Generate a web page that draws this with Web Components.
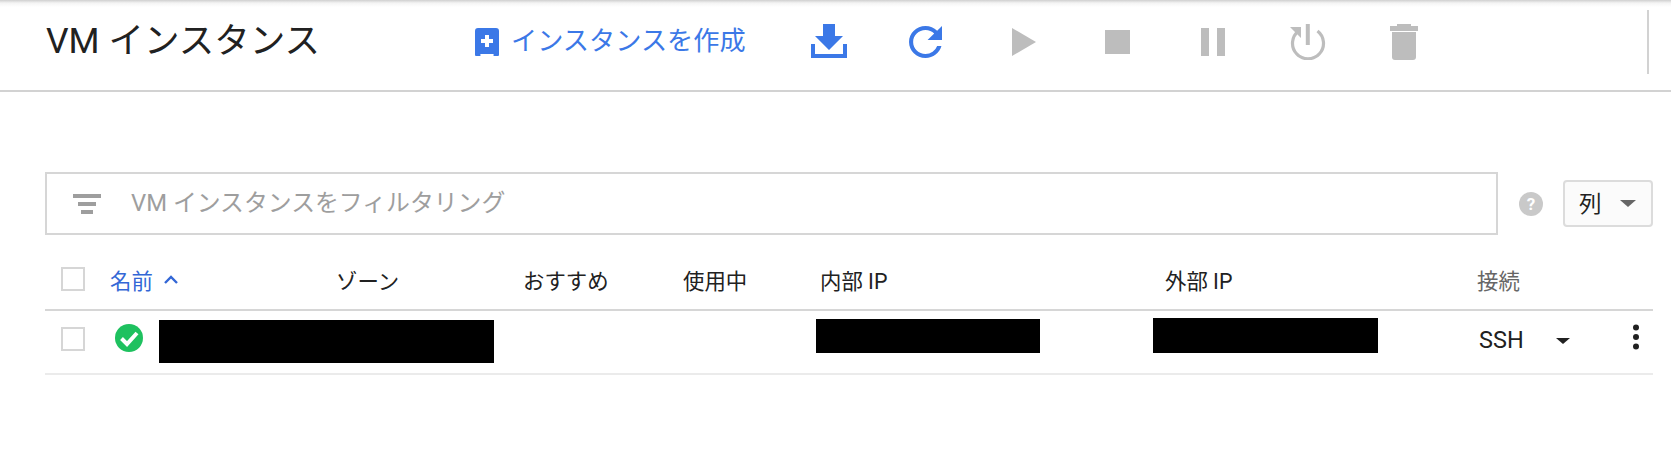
<!DOCTYPE html>
<html lang="ja">
<head>
<meta charset="utf-8">
<title>VM インスタンス</title>
<style>
  html,body{margin:0;background:#fff}
  body{font-family:Roboto,"Noto Sans CJK JP",sans-serif;color:#212121;width:1671px;height:473px;overflow:hidden}
</style>
</head>
<body>
<vm-toolbar></vm-toolbar>
<vm-filter-bar placeholder="VM インスタンスをフィルタリング"></vm-filter-bar>
<vm-table></vm-table>
<script>
const BLUE = "#3b78e7";
const GREY = "#bdbdbd";

class VmToolbar extends HTMLElement {
  constructor() {
    super();
    this.attachShadow({ mode: "open" });
  }
  connectedCallback() {
    this.shadowRoot.innerHTML = `
      <style>
        :host{display:flex;align-items:flex-start;height:90px;border-bottom:2px solid #d2d2d2;padding-left:46px;box-sizing:content-box;
          background:linear-gradient(#cfcfcf,#f4f4f4 3px,#fff 7px)}
        h1{margin:0;flex:0 0 429px;font:400 35.5px/50px Roboto,"Noto Sans CJK JP",sans-serif;color:#212121;padding-top:16px;white-space:nowrap}
        .create{flex:0 0 336px;display:flex;align-items:flex-start;color:${BLUE};font-size:26.2px;line-height:36px;padding-top:23px}
        .create svg{margin:5px 12px 0 0;flex:none}
        .create span{white-space:nowrap}
        svg{display:block;flex:none}
        .ico{margin-top:var(--t);margin-left:var(--l)}
        .sep{width:2px;height:64px;margin:10px 0 0 229px;background:#d2d2d2;flex:none}
      </style>
      <h1>VM インスタンス</h1>
      <div class="create">
        <svg width="24" height="28" viewBox="0 0 24 28"><path fill="${BLUE}" d="M3 0h18a3 3 0 0 1 3 3v24a1 1 0 0 1-1 1h-3a1 1 0 0 1-1-2H5a1 1 0 0 1-1 2H1a1 1 0 0 1-1-1V3a3 3 0 0 1 3-3z"/><path fill="#fff" d="M10 7h4v4h4v4h-4v4h-4v-4H6v-4h4z"/></svg>
        <span>インスタンスを作成</span>
      </div>
      <svg class="ico" style="--t:24px;--l:0" width="36" height="34" viewBox="0 0 36 34"><path fill="${BLUE}" d="M12 0h12v12h8L18 26 4 12h8zM0 20h4v10h28V20h4v14H0z"/></svg>
      <svg class="ico" style="--t:26px;--l:62px" width="33" height="32" viewBox="4 4 16 16" preserveAspectRatio="none"><path fill="${BLUE}" d="M17.65 6.35A7.958 7.958 0 0 0 12 4c-4.42 0-7.99 3.58-7.99 8s3.57 8 7.99 8c3.73 0 6.84-2.55 7.73-6h-2.08A5.99 5.99 0 0 1 12 18c-3.31 0-6-2.69-6-6s2.69-6 6-6c1.66 0 3.14.69 4.22 1.78L13 11h7V4l-2.35 2.35z"/></svg>
      <svg class="ico" style="--t:28px;--l:70px" width="24" height="28" viewBox="0 0 24 28"><path fill="${GREY}" d="M0 0l24 14L0 28z"/></svg>
      <svg class="ico" style="--t:30px;--l:69px" width="25" height="24"><rect width="25" height="24" fill="${GREY}"/></svg>
      <svg class="ico" style="--t:28px;--l:71px" width="24" height="28"><rect width="8" height="28" fill="${GREY}"/><rect x="16" width="8" height="28" fill="${GREY}"/></svg>
      <svg class="ico" style="--t:24px;--l:65px" width="36" height="36" viewBox="0 0 36 36"><path fill="none" stroke="${GREY}" stroke-width="3.2" d="M8.5 7A15.5 15.5 0 1 0 27.5 7"/><path fill="${GREY}" d="M15.8 0h4v21h-4zM0 3h11v11z"/></svg>
      <svg class="ico" style="--t:24px;--l:64px" width="28" height="36" viewBox="0 0 28 36"><path fill="${GREY}" d="M7 0h14v2h7v5H0V2h7zM2 8h24v25a3 3 0 0 1-3 3H5a3 3 0 0 1-3-3z"/></svg>
      <div class="sep"></div>
    `;
  }
}

class VmFilterBar extends HTMLElement {
  constructor() {
    super();
    this.attachShadow({ mode: "open" });
  }
  connectedCallback() {
    this.shadowRoot.innerHTML = `
      <style>
        :host{display:flex;align-items:center;margin:80px 0 0 45px;width:1608px}
        .box{width:1453px;height:63px;box-sizing:border-box;border:2px solid #d6d6d6;display:flex;align-items:center;padding-left:26px;flex:none}
        .box svg{margin-right:30px;flex:none}
        .ph{color:#9e9e9e;font-size:23.85px;white-space:nowrap;margin-bottom:6px}
        .help{margin-left:21px;flex:none}
        vm-column-button{margin-left:20px}
      </style>
      <div class="box">
        <svg width="28" height="20"><path fill="#9e9e9e" d="M0 0h28v4H0zM5 8h18v4H5zM8 16h12v4H8z"/></svg>
        <span class="ph">${this.getAttribute("placeholder") ?? ""}</span>
      </div>
      <svg class="help" width="24" height="24" viewBox="0 0 24 24"><circle cx="12" cy="12" r="12" fill="#c9c9c9"/><text x="12" y="18" text-anchor="middle" fill="#fff" font-family="Roboto,sans-serif" font-weight="700" font-size="17">?</text></svg>
      <vm-column-button>列</vm-column-button>
    `;
  }
}

class VmColumnButton extends HTMLElement {
  constructor() {
    super();
    this.attachShadow({ mode: "open" });
  }
  connectedCallback() {
    this.shadowRoot.innerHTML = `
      <style>
        :host{display:flex;align-items:center;width:90px;height:47px;box-sizing:border-box;border:2px solid #dcdcdc;border-radius:4px;background:#fbfbfb;padding:0 0 4px 14px;font-size:22.5px;color:#212121}
        svg{margin:4px 0 0 18px}
      </style>
      <slot></slot>
      <svg width="16" height="7"><path fill="#666" d="M0 0h16L8 7z"/></svg>
    `;
  }
}

class VmCheckbox extends HTMLElement {
  constructor() {
    super();
    this.attachShadow({ mode: "open" });
    this.shadowRoot.innerHTML = `<style>:host{display:block;width:24px;height:24px;box-sizing:border-box;border:2px solid #d6d6d6;background:#fff}</style>`;
  }
}

class VmTable extends HTMLElement {
  constructor() {
    super();
    this.attachShadow({ mode: "open" });
  }
  connectedCallback() {
    this.shadowRoot.innerHTML = `
      <style>
        :host{display:block;margin:14px 0 0 45px;width:1608px;font-size:21.4px;color:#212121}
        .head,.row{display:grid;align-items:center}
        .head{grid-template-columns:65px 226px 187px 160px 137px 345px 312px 1fr;height:60px;border-bottom:2px solid #d6d6d6}
        .row{grid-template-columns:70px 44px 657px 337px 326px 77px 1fr;height:62px;border-bottom:2px solid #ebebeb}
        vm-checkbox{margin-left:16px}
        .name{color:#3367d6;display:flex;align-items:center}
        .name svg{margin-left:11px}
        .conn{color:#666}
        .row vm-checkbox{margin-top:-7px}
        .mask{background:#000}
        .m1{width:335px;height:43px;margin-top:-1px}
        .m2{width:224px;height:34px;margin-top:-12px}
        .m3{width:225px;height:35px;margin-top:-13px}
        .ssh{font-size:23.5px;color:#212121;margin-top:-4px}
        .check{margin-top:-8px}
        .actions{display:flex;align-items:center;justify-content:space-between;padding-right:13px}
        .arrow{display:block;margin-top:-2px}
        .more{display:block;margin-top:-10px}
      </style>
      <div class="head">
        <vm-checkbox></vm-checkbox>
        <div class="name">名前<svg width="14" height="9" viewBox="0 0 14 9"><path fill="none" stroke="#3367d6" stroke-width="2.4" d="M1 8l6-6 6 6"/></svg></div>
        <div>ゾーン</div>
        <div>おすすめ</div>
        <div>使用中</div>
        <div>内部 IP</div>
        <div>外部 IP</div>
        <div class="conn">接続</div>
      </div>
      <div class="row">
        <vm-checkbox></vm-checkbox>
        <svg class="check" width="28" height="28" viewBox="0 0 28 28"><circle cx="14" cy="14" r="14" fill="#1ec15f"/><path fill="none" stroke="#fff" stroke-width="4" d="M6.5 14.5l5.5 5.5 10-11"/></svg>
        <div class="mask m1"></div>
        <div class="mask m2"></div>
        <div class="mask m3"></div>
        <div class="ssh">SSH</div>
        <div class="actions">
          <svg class="arrow" width="14" height="6"><path fill="#212121" d="M0 0h14L7 6z"/></svg>
          <svg class="more" width="8" height="26"><circle cx="4" cy="3.5" r="3" fill="#212121"/><circle cx="4" cy="13" r="3" fill="#212121"/><circle cx="4" cy="22.5" r="3" fill="#212121"/></svg>
        </div>
      </div>
    `;
  }
}

customElements.define("vm-checkbox", VmCheckbox);
customElements.define("vm-column-button", VmColumnButton);
customElements.define("vm-toolbar", VmToolbar);
customElements.define("vm-filter-bar", VmFilterBar);
customElements.define("vm-table", VmTable);
</script>
</body>
</html>
